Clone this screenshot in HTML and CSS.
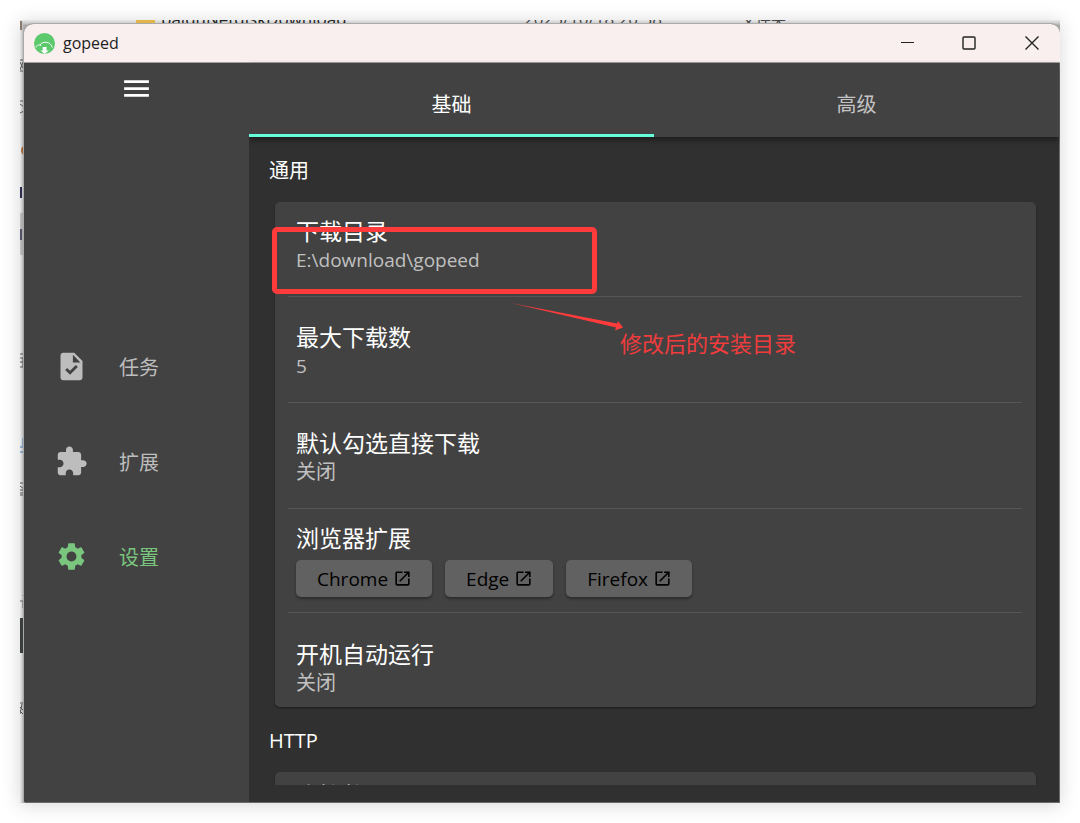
FILE: index.html
```html
<!DOCTYPE html>
<html lang="zh-CN">
<head>
<meta charset="utf-8">
<title>gopeed</title>
<link rel="stylesheet" href="styles.css">
</head>
<body>
<div class="capture">
  <div class="desktop" aria-hidden="true">
    <span class="folder-icon"></span>
    <span class="file-name">baiduNetdiskDownload</span>
    <span class="file-date">2025/10/18 20:38</span>
    <span class="file-type">文件夹</span>
    <svg class="desktop-edge" viewBox="0 0 4 783" preserveAspectRatio="xMinYMin slice">
      <path d="M0 1h2v9H0z" fill="#8a7a6c"/>
      <path d="M0 40h3M0 42l4 8M3 42l-3 8M0 51h4M0 81h3M0 84l4 3v4l-4 2M0 334h4M0 338h4M0 342h3M0 347h4M3 338v9M0 463h4M0 466l4 3M0 470h4M0 473h3M0 475h4M0 683h4M0 687l4 4M0 691l4 4M2 684l-2 10" fill="none" stroke="#555" stroke-width="1"/>
      <path d="M3 127l-1 3 1 4" fill="none" stroke="#a3622f" stroke-width="2"/>
      <path d="M1 167v11M1 209v11" fill="none" stroke="#2c2c50" stroke-width="2"/>
      <path d="M0 193h4v42H0z" fill="#888" fill-opacity=".4"/>
      <path d="M0 427h4v5H0M3 418v8" fill="none" stroke="#3f79b5" stroke-width="1"/>
      <path d="M3 575v1M0 581h3v7" fill="none" stroke="#666" stroke-width="1"/>
      <path d="M0 598h4v35H0z" fill="#3a3d3d"/>
    </svg>
  </div>

  <div class="window">
    <header class="titlebar">
      <svg class="logo" viewBox="0 0 21 21" aria-hidden="true">
        <circle cx="10.500" cy="10.500" r="10.500" fill="#5bc96c"/>
        <path d="M2 14.500C2.500 11.800 5 11.300 7 12.800M6 12C8 8 17 8 18.300 14.500" fill="none" stroke="#fff" stroke-width="1"/>
        <path d="M8.700 14h3.800v3.500h2.300L10.600 21 6.500 17.500h2.200z" fill="#fff"/>
      </svg>
      <span class="app-name">gopeed</span>
      <div class="window-controls">
        <button class="window-button" aria-label="最小化"><svg viewBox="0 0 14 14"><path d="M1 6.500h13" stroke-width="1"/></svg></button>
        <button class="window-button" aria-label="最大化"><svg viewBox="0 0 14 14"><rect x="1" y="1" width="12" height="12" rx="1"/></svg></button>
        <button class="window-button" aria-label="关闭"><svg viewBox="0 0 14 14"><path d="M.5.5l13 13M13.500.5l-13 13"/></svg></button>
      </div>
    </header>

    <div class="app">
      <aside class="sidebar">
        <button class="menu-button" aria-label="菜单"><svg class="icon" viewBox="0 0 24 24"><path d="M3 18h18v-2H3v2zm0-5h18v-2H3v2zm0-7v2h18V6H3z"/></svg></button>
        <nav class="nav">
          <a class="nav-item" href="#tasks"><svg class="icon" viewBox="0 0 24 24"><path d="M14 2H6c-1.100 0-1.990.9-1.990 2L4 20c0 1.100.89 2 1.990 2H18c1.100 0 2-.9 2-2V8l-6-6zm-3.060 16L7.400 14.460l1.410-1.410 2.120 2.120 4.240-4.240 1.410 1.410L10.940 18zM13 9V3.500L18.500 9H13z"/></svg>任务</a>
          <a class="nav-item" href="#extensions"><svg class="icon" viewBox="0 0 24 24"><path d="M20.500 11H19V7c0-1.100-.9-2-2-2h-4V3.500C13 2.120 11.880 1 10.500 1S8 2.120 8 3.500V5H4c-1.100 0-1.990.9-1.990 2v3.800H3.500c1.490 0 2.700 1.210 2.700 2.700s-1.210 2.700-2.700 2.700H2V20c0 1.100.9 2 2 2h3.800v-1.500c0-1.490 1.210-2.700 2.700-2.700s2.700 1.210 2.700 2.700V22H17c1.100 0 2-.9 2-2v-4h1.500c1.380 0 2.500-1.120 2.500-2.500S21.880 11 20.500 11z"/></svg>扩展</a>
          <a class="nav-item nav-item-active" href="#settings"><svg class="icon" viewBox="0 0 24 24"><path d="M19.140 12.940c.04-.3.060-.61.060-.94 0-.32-.020-.64-.070-.94l2.030-1.580c.18-.14.23-.41.120-.61l-1.920-3.320c-.12-.22-.37-.29-.59-.22l-2.390.96c-.5-.38-1.030-.7-1.620-.94l-.36-2.540c-.040-.24-.24-.41-.48-.41h-3.840c-.24 0-.43.17-.47.41l-.36 2.540c-.59.24-1.130.57-1.620.94l-2.390-.96c-.22-.080-.47 0-.59.22L2.740 8.870c-.12.21-.080.47.12.61l2.030 1.580c-.05.3-.09.63-.09.94s.020.64.070.94l-2.030 1.580c-.18.14-.23.41-.12.61l1.920 3.320c.12.22.37.29.59.22l2.390-.96c.5.38 1.030.7 1.620.94l.36 2.540c.05.24.24.41.48.41h3.840c.24 0 .44-.17.47-.41l.36-2.540c.59-.24 1.130-.56 1.620-.94l2.390.96c.22.080.47 0 .59-.22l1.920-3.320c.12-.22.070-.47-.12-.61l-2.010-1.580zM12 15.600c-1.980 0-3.600-1.620-3.600-3.600s1.620-3.600 3.600-3.600 3.600 1.620 3.600 3.600-1.620 3.600-3.600 3.600z"/></svg>设置</a>
        </nav>
      </aside>

      <main class="main">
        <div class="tabs" role="tablist">
          <button class="tab tab-active" role="tab" aria-selected="true">基础</button>
          <button class="tab" role="tab" aria-selected="false">高级</button>
        </div>
        <div class="settings">
          <h2 class="section-title">通用</h2>
          <section class="card">
            <div class="row row-compact">
              <h3 class="row-title">下载目录</h3>
              <p class="row-value row-value-latin">E:\download\gopeed</p>
            </div>
            <div class="row">
              <h3 class="row-title">最大下载数</h3>
              <p class="row-value row-value-latin">5</p>
            </div>
            <div class="row">
              <h3 class="row-title">默认勾选直接下载</h3>
              <p class="row-value">关闭</p>
            </div>
            <div class="row row-compact row-actions">
              <h3 class="row-title">浏览器扩展</h3>
              <div class="actions">
                <button class="action">Chrome<svg class="action-icon" viewBox="0 0 24 24"><path d="M19 19H5V5h7V3H5c-1.110 0-2 .9-2 2v14c0 1.100.89 2 2 2h14c1.100 0 2-.9 2-2v-7h-2v7zM14 3v2h3.590l-9.830 9.830 1.410 1.410L19 6.410V10h2V3h-7z"/></svg></button>
                <button class="action">Edge<svg class="action-icon" viewBox="0 0 24 24"><path d="M19 19H5V5h7V3H5c-1.110 0-2 .9-2 2v14c0 1.100.89 2 2 2h14c1.100 0 2-.9 2-2v-7h-2v7zM14 3v2h3.590l-9.830 9.830 1.410 1.410L19 6.410V10h2V3h-7z"/></svg></button>
                <button class="action">Firefox<svg class="action-icon" viewBox="0 0 24 24"><path d="M19 19H5V5h7V3H5c-1.110 0-2 .9-2 2v14c0 1.100.89 2 2 2h14c1.100 0 2-.9 2-2v-7h-2v7zM14 3v2h3.590l-9.830 9.830 1.410 1.410L19 6.410V10h2V3h-7z"/></svg></button>
              </div>
            </div>
            <div class="row row-last">
              <h3 class="row-title">开机自动运行</h3>
              <p class="row-value">关闭</p>
            </div>
          </section>
          <h2 class="section-title">HTTP</h2>
          <section class="card">
            <div class="row row-tight">
              <h3 class="row-title">连接数</h3>
              <p class="row-value row-value-latin">16</p>
            </div>
          </section>
        </div>
      </main>
    </div>
  </div>

  <div class="callout-box"></div>
  <svg class="callout-arrow" viewBox="0 0 112 28" aria-hidden="true"><path d="M0 0L106 20.500 107 18 112 24.500 104 27.500 105 24.500z" fill="#ff3b3b"/></svg>
  <p class="callout-text">修改后的安装目录</p>
</div>
</body>
</html>
```

FILE: styles.css
```css
* {
  box-sizing: border-box;
}

body {
  margin: 0;
  padding: 20px;
  background: #fff;
  font-family: "Open Sans", "Noto Sans CJK SC", sans-serif;
}

h2, h3, p {
  margin: 0;
  font-weight: 400;
}

button {
  border: 0;
  padding: 0;
  background: none;
  font: inherit;
  color: inherit;
}

.capture {
  position: relative;
  display: flex;
  height: calc(100vh - 40px);
  padding: 4px 0 0 4px;
  background: linear-gradient(to right, #ececec, #a8a8a8 4px);
  box-shadow: 0 2px 18px rgba(0, 0, 0, 0.16);
}

/* Explorer window showing behind the app */
.desktop {
  position: absolute;
  inset: 0;
  overflow: hidden;
  font-size: 15px;
  line-height: 20px;
  color: #444;
  background: linear-gradient(to bottom, #e9e9e9, #c4c4c4 4px, transparent 5px);
}

.folder-icon, .file-name, .file-date, .file-type, .desktop-edge {
  position: absolute;
  top: -11px;
  white-space: nowrap;
}

.folder-icon {
  top: 0;
  left: 116px;
  width: 19px;
  height: 5px;
  background: #e3b64d;
}

.file-name {
  left: 141px;
  font-size: 17px;
  color: #222;
}

.file-date {
  left: 504px;
  font-size: 17px;
}

.file-type {
  left: 721px;
}

.desktop-edge {
  top: 0;
  left: 0;
  width: 4px;
  height: 100%;
}

.window {
  position: relative;
  flex: 1;
  display: flex;
  flex-direction: column;
  min-width: 0;
  overflow: hidden;
  border-radius: 9px 9px 0 3px;
  background: #424242;
  box-shadow: 0 0 0 1px #aaa;
  clip-path: inset(-1px 0 0 -1px);
}

.titlebar {
  display: flex;
  align-items: center;
  height: 39px;
  padding-left: 10px;
  border-bottom: 1px solid #a5a0a0;
  background: #f9efef;
  color: #222;
}

.logo {
  width: 21px;
  height: 21px;
}

.app-name {
  margin-left: 8px;
  font-size: 16px;
}

.window-controls {
  display: flex;
  margin-left: auto;
}

.window-button {
  display: flex;
  align-items: center;
  justify-content: center;
  width: 62px;
  height: 38px;
}

.window-button:last-child {
  width: 60px;
  padding-left: 4px;
}

.window-button svg {
  width: 14px;
  height: 14px;
  fill: none;
  stroke: #222;
  stroke-width: 1.400;
}

.app {
  flex: 1;
  display: flex;
  min-height: 0;
  border-right: 1px solid #6a6a6a;
  border-bottom: 1px solid #6a6a6a;
}

.sidebar {
  position: relative;
  z-index: 1;
  display: flex;
  flex-direction: column;
  width: 225px;
  background: #424242;
  color: #bdbdbd;
}

.icon {
  width: 33px;
  height: 33px;
  fill: currentColor;
}

.menu-button {
  display: flex;
  justify-content: center;
  height: 57px;
  padding-top: 9px;
  color: #fff;
}

.nav {
  flex: 1;
  display: flex;
  flex-direction: column;
  justify-content: center;
}

.nav-item {
  display: flex;
  align-items: center;
  gap: 31px;
  height: 95px;
  padding-left: 31px;
  font-size: 20px;
  color: #bdbdbd;
  text-decoration: none;
}

.nav-item-active {
  color: #7bc67e;
}

.main {
  flex: 1;
  display: flex;
  flex-direction: column;
  min-width: 0;
  padding-bottom: 17px;
  background: #303030;
}

.tabs {
  position: relative;
  display: flex;
  height: 74px;
  background: #424242;
  box-shadow: 0 3px 6px rgba(0, 0, 0, 0.4);
}

.tab {
  flex: 1;
  padding-top: 9px;
  border-bottom: 3px solid transparent;
  font-size: 20px;
  color: #c4c4c4;
}

.tab-active {
  border-bottom-color: #64ffda;
  color: #fff;
}

.settings {
  flex: 1;
  min-height: 0;
  overflow: hidden;
  padding: 0 23px 0 26px;
}

.section-title {
  margin-left: -6px;
  padding: 20px 0 17px;
  font-size: 20px;
  line-height: 28px;
  color: #fff;
}

.card {
  padding: 0 14px 0 13px;
  border-radius: 5px;
  background: #424242;
  box-shadow: 0 1px 2px rgba(0, 0, 0, 0.4);
}

.row {
  padding: 25px 8px 22px;
  border-bottom: 1px solid #565656;
}

.row-compact {
  padding-top: 14px;
}

.row-actions {
  padding-bottom: 15px;
}

.row-last {
  padding-top: 26px;
  padding-bottom: 10px;
  border-bottom: 0;
}

.row-tight {
  padding-top: 8px;
}

.row-title {
  font-size: 23px;
  line-height: 30px;
  color: #fff;
}

.row-value {
  font-size: 20px;
  line-height: 28px;
  color: #c0c0c0;
}

.row-value-latin {
  font-size: 19px;
}

.actions {
  display: flex;
  gap: 13px;
  margin-top: 7px;
}

.action {
  display: flex;
  align-items: center;
  gap: 5px;
  height: 37px;
  padding: 0 20px 0 21px;
  border-radius: 5px;
  background: #616161;
  box-shadow: 0 2px 3px rgba(0, 0, 0, 0.35);
  font-size: 19px;
  font-weight: 500;
  color: #000;
}

.action-icon {
  width: 19px;
  height: 19px;
}

/* Red annotation drawn over the window */
.callout-box {
  position: absolute;
  top: 207px;
  left: 252px;
  width: 325px;
  height: 67px;
  border: 5px solid #ff3b3b;
  border-radius: 5px;
}

.callout-arrow {
  position: absolute;
  top: 283px;
  left: 491px;
  width: 112px;
  height: 28px;
}

.callout-text {
  position: absolute;
  top: 308px;
  left: 600px;
  font-size: 22px;
  line-height: 30px;
  color: #f03c3c;
}
```
